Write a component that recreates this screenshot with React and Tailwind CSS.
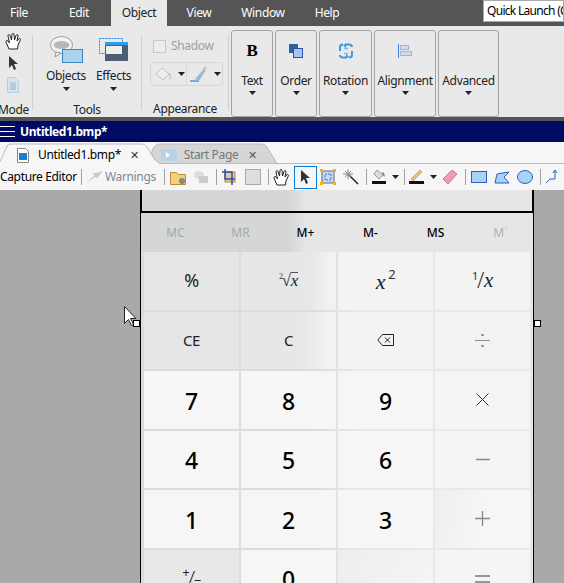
const Caret = ({ className = '' }) => (
  <svg width="7" height="4" viewBox="0 0 7 4" className={className}><path d="M0 0h7L3.500 4z" fill="#222" /></svg>
);

const RibbonButton = ({ label, width, icon }) => (
  <div className={`flex flex-col items-center h-[87px] border border-[#a3a3a3] rounded-[3px] ${width}`}>
    <div className="h-[20px] mt-[10px] flex items-center justify-center">{icon}</div>
    <div className="mt-[12px] leading-[16px]">{label}</div>
    <Caret className="mt-[2px]" />
  </div>
);

const Sep = ({ className = '' }) => <div className={`w-px h-[16px] bg-[#a0a0a0] shrink-0 ${className}`} />;

const Menu = ({ label, width, active }) => (
  <div className={`h-[26px] flex items-center justify-center ${width} ${active ? 'bg-[#e9e9e9] text-[#222]' : 'text-white'}`}>{label}</div>
);

const Hand = ({ className = '' }) => (
  <svg width="17" height="17" viewBox="0 0 17 17" fill="#fff" stroke="#222" className={className}>
    <path d="M4 16L1 9c-.5-1.500 1-2 2-1l1.500 2L3 3c-.3-1.500 1.700-2 2-.5L6.500 7 7 1.500c.1-1.500 2-1.500 2 0L9.500 7 11 2.500c.4-1.500 2.300-1 2 .5L12 8l1.500-2c.9-1.200 2.500-.3 1.800 1L13 12l-.5 4z" />
  </svg>
);

const Arrow = ({ className = '' }) => (
  <svg width="9" height="15" viewBox="0 0 9 15" className={className}><path d="M0 0l9 8H5l2 5-2 1-2-5-3 3z" fill="#333" /></svg>
);

const keys = [
  { k: '%', bg: 'bg-[#e6e6e6]', size: 'text-[18px]', font: 'light' },
  { k: 'root', bg: 'bg-[linear-gradient(90deg,#e7e7e7_70%,#f2f2f2_95%)]' },
  { k: 'sq', bg: 'bg-[#f3f3f3]' },
  { k: 'inv', bg: 'bg-[#f3f3f3]' },
  { k: 'CE', bg: 'bg-[#e6e6e6]', size: 'text-[15px]', font: 'light' },
  { k: 'C', bg: 'bg-[linear-gradient(90deg,#e7e7e7_65%,#f2f2f2_90%)]', size: 'text-[15px]', font: 'light' },
  { k: 'back', bg: 'bg-[#f3f3f3]' },
  { k: 'div', bg: 'bg-[#f2f2f2]' },
  { k: '7' }, { k: '8' }, { k: '9' }, { k: 'mul', bg: 'bg-[#f5f5f5]' },
  { k: '4' }, { k: '5' }, { k: '6' }, { k: 'min', bg: 'bg-[#f5f5f5]' },
  { k: '1' }, { k: '2' }, { k: '3' }, { k: 'add', bg: 'bg-[linear-gradient(100deg,#eeeeee,#f6f6f6_50%)]' },
  { k: 'neg', bg: 'bg-[#e8e8e8]' }, { k: '0' }, { k: 'dot', bg: 'bg-[linear-gradient(120deg,#ecefee,#f5f5f5)]' }, { k: 'eq', bg: 'bg-[#f5f5f5]' },
];

const MathX = ({ children }) => <span className="font-['Liberation_Serif',serif] italic text-[#222]">{children}</span>;

const KeyFace = ({ k, size, font }) => {
  if (k === 'root') return (
    <span className="text-[17px] flex items-start font-['Liberation_Serif',serif] leading-[17px]">
      <span className="text-[8px] leading-[10px] text-[#333]">2</span>
      <span className="text-[#333] -ml-[1px]">√</span>
      <span className="border-t border-[#555] leading-[15px]"><MathX>x</MathX></span>
    </span>
  );
  if (k === 'sq') return <span className="text-[22px] leading-none"><MathX>x</MathX><span className="text-[13px] align-top ml-[3px] relative -top-[1px] text-[#333]">2</span></span>;
  if (k === 'inv') return <span className="text-[21px] leading-none flex items-start"><span className="text-[11px] leading-[12px] text-[#333]">1</span><span className="text-[#333] font-light -ml-[1px]">/</span><MathX>x</MathX></span>;
  if (k === 'back') return (
    <svg width="17" height="12" viewBox="0 0 17 12" fill="none" stroke="#222"><path d="M5.500.5H16.500v11H5.500L.8 6z" /><path d="M8 3.500l5 5M13 3.500l-5 5" /></svg>
  );
  if (k === 'div') return (
    <svg width="15" height="13" viewBox="0 0 15 13"><path d="M0 6.500h15" stroke="#8a8a8a" /><rect x="6.500" y="0" width="2" height="2" fill="#777" /><rect x="6.500" y="11" width="2" height="2" fill="#777" /></svg>
  );
  if (k === 'mul') return <svg width="13" height="13" viewBox="0 0 13 13"><path d="M.5.500l12 12M12.500.500l-12 12" stroke="#333" /></svg>;
  if (k === 'min') return <svg width="14" height="3" viewBox="0 0 14 3"><path d="M0 1.500h14" stroke="#888" strokeWidth="1.500" /></svg>;
  if (k === 'add') return <svg width="15" height="15" viewBox="0 0 15 15"><path d="M0 7.500h15M7.500 0v15" stroke="#888" strokeWidth="1.300" /></svg>;
  if (k === 'eq') return <svg width="15" height="9" viewBox="0 0 15 9" className="mt-[2px]"><path d="M0 1h15M0 7h15" stroke="#777" strokeWidth="1.300" /></svg>;
  if (k === 'neg') return (
    <span className="flex items-start h-[20px] text-[#222] leading-none">
      <span className="text-[13px] -mt-[2px]">+</span>
      <span className="text-[19px] font-light -ml-[1px]">/</span>
      <span className="text-[13px] mt-[6px] -ml-[1px]">−</span>
    </span>
  );
  if (k === 'dot') return null;
  if (font === 'light') return <span className={`${size} text-[#222]`}>{k}</span>;
  return <span className="text-[23px] font-medium text-black leading-none mt-[3px]">{k}</span>;
};

export default function App() {
  return (
    <div className="relative w-[564px] h-[583px] overflow-hidden bg-[#a9a9a9] font-['Noto_Sans',sans-serif] text-[12px] tracking-[-0.35px] text-[#222]">
      {/* 메뉴 */}
      <div className="flex h-[26px] bg-[#555555]">
        <Menu label="File" width="w-[38px]" />
        <Menu label="Edit" width="w-[73px] pl-[9px]" />
        <Menu label="Object" width="w-[56px]" active />
        <Menu label="View" width="w-[64px]" />
        <Menu label="Window" width="w-[64px]" />
        <Menu label="Help" width="w-[64px]" />
        <div className="ml-auto w-[81px] h-[22px] bg-white border border-[#aaa] pl-[3px] leading-[20px] tracking-[-0.7px] text-black whitespace-nowrap overflow-hidden">Quick Launch (C</div>
      </div>

      {/* 리본 */}
      <div className="flex h-[91px] bg-[#e9e9e9]">
        <div className="w-[33px] h-[75px] mt-[9px] border-r border-[#d0d0d0] relative">
          <Hand className="absolute left-[5px] -top-[2px]" />
          <Arrow className="absolute left-[9px] top-[21px]" />
          <svg width="12" height="16" viewBox="0 0 12 16" className="absolute left-[7px] top-[42px]"><path d="M.5.500h7l4 4v11H.5z" fill="#d5e4ee" stroke="#bcccd6" /><path d="M3 6h6M3 8h6M3 10h6M3 12h6" stroke="#8eb4ca" /></svg>
          <div className="absolute -left-[2px] top-[67px] leading-[16px] whitespace-nowrap">Mode</div>
        </div>

        <div className="w-[109px] h-[75px] mt-[9px] border-r border-[#d0d0d0] flex flex-col">
          <div className="flex h-[56px]">
            <div className="w-[66px] flex flex-col items-center">
              <svg width="33" height="27" viewBox="0 0 33 27" className="mt-[1px] ml-[1px]"><ellipse cx="11.500" cy="9" rx="11" ry="8.500" fill="#f4f4f4" stroke="#9a9a9a" /><ellipse cx="11.500" cy="9" rx="8" ry="4" fill="#b7b7b7" /><path d="M6 16l-1 5 6-4z" fill="#f4f4f4" stroke="#9a9a9a" /><rect x="12.500" y="13.500" width="20" height="13" fill="#a9d3ef" stroke="#3f85bd" /></svg>
              <div className="mt-[5px] leading-[16px]">Objects</div>
              <Caret className="mt-[3px]" />
            </div>
            <div className="w-[29px] flex flex-col items-center">
              <svg width="29" height="23" viewBox="0 0 29 23" className="mt-[3px]"><rect x=".5" y=".5" width="23" height="15" fill="none" stroke="#1e88e5" strokeDasharray="2 1" /><rect x="6" y="4" width="23" height="19" fill="#4d5d74" /><rect x="6" y="4" width="23" height="3" fill="#2f9de6" /><rect x="7" y="8" width="16" height="8" fill="#eeeeee" /></svg>
              <div className="mt-[7px] leading-[16px]">Effects</div>
              <Caret className="mt-[3px]" />
            </div>
          </div>
          <div className="text-center mt-[11px] leading-[16px]">Tools</div>
        </div>

        <div className="w-[87px] h-[75px] mt-[9px] border-r border-[#d0d0d0] flex flex-col items-center">
          <div className="flex items-center gap-[5px] w-full pl-[11px] mt-[3px] text-[#a0a0a0]">
            <div className="w-[13px] h-[13px] border border-[#c8c8c8] bg-[#ededed]" />
            <span className="leading-[16px]">Shadow</span>
          </div>
          <div className="flex self-start ml-[8px] mt-[8px] w-[73px] h-[24px] border border-[#d8d8d8] rounded-[3px] shrink-0">
            <div className="w-[36px] border-r border-[#d8d8d8] flex items-center pl-[4px] gap-[5px]">
              <svg width="18" height="15" viewBox="0 0 18 15"><path d="M7 1l7 6-6 6-7-6z" fill="#eeeeee" stroke="#c0c0c0" /><path d="M14 6c3 1 3 5 1 7-1-3-1-5-1-7z" fill="#b8cfe4" /></svg>
              <Caret />
            </div>
            <div className="flex-1 flex items-center pl-[3px] gap-[7px]">
              <svg width="17" height="17" viewBox="0 0 17 17"><path d="M0 15h9" stroke="#7fa8d8" strokeWidth="2" /><path d="M5 13l9-10 2 1-7 11z" fill="#9db7dc" /><path d="M13 4l3-3" stroke="#d8c27a" strokeWidth="2" /></svg>
              <Caret />
            </div>
          </div>
          <div className="mt-[15px] leading-[16px] whitespace-nowrap shrink-0">Appearance</div>
        </div>

        <div className="flex gap-[2px] ml-[2px] mt-[4px]">
          <RibbonButton label="Text" width="w-[42px]" icon={<span className="font-['Liberation_Serif',serif] font-bold text-[17px] text-black">B</span>} />
          <RibbonButton label="Order" width="w-[42px]" icon={
            <svg width="14" height="14" viewBox="0 0 14 14"><rect width="9" height="9" fill="#2e5f9e" /><rect x="4.500" y="4.500" width="9" height="9" fill="#a9c4e6" stroke="#2b4fae" /></svg>
          } />
          <RibbonButton label="Rotation" width="w-[53px]" icon={
            <svg width="16" height="16" viewBox="0 0 16 16" fill="none" stroke="#3a9be0" strokeWidth="2">
              <path d="M2 8V4c0-1.500 1-2.500 3-2.500" />
              <path d="M8 1.500h3c2 0 3 1 3 2.500" />
              <path d="M14 8v4c0 1.500-1 2.500-3 2.500" />
              <path d="M8 14.500H5c-2 0-3-1-3-2.500" />
              <path d="M6 5.500h4M10 10.500H6" stroke="#7cc0ee" strokeWidth="1.500" />
              <path d="M8 0v5l-3-2.500zM8 16v-5l3 2.500z" fill="#3a9be0" stroke="none" />
            </svg>
          } />
          <RibbonButton label="Alignment" width="w-[62px]" icon={
            <svg width="14" height="14" viewBox="0 0 14 14"><path d="M.5 0v14" stroke="#4a7fe0" /><rect x="2.500" y="1.500" width="8" height="4" fill="#cfdcee" stroke="#9db4d4" /><rect x="2.500" y="7.500" width="11" height="4" fill="#cfdcee" stroke="#9db4d4" /></svg>
          } />
          <RibbonButton label="Advanced" width="w-[61px]" icon={null} />
        </div>
      </div>

      <div className="h-[4px] bg-[#555555]" />

      {/* 제목 표시줄 */}
      <div className="flex items-center h-[21px] bg-[#000a64] text-white">
        <svg width="15" height="13" viewBox="0 0 15 13"><path d="M0 1.500h15M0 6.500h15M0 11.500h15" stroke="#fff" strokeWidth="1.200" /></svg>
        <span className="ml-[5px] font-bold tracking-[-0.4px]">Untitled1.bmp*</span>
      </div>

      {/* 탭 */}
      <div className="relative flex items-center h-[22px] pt-[4px] bg-[#f6f6f6]">
        <svg width="564" height="22" viewBox="0 0 564 22" className="absolute left-0 top-0">
          <path d="M160 21.500Q155 19 152 13Q151 10 153 7Q155 2 160 2H262Q265 2 267 5L277 21.500z" fill="#d6d6d6" stroke="#bbbbbb" />
          <path d="M0 20L7 4Q8 2 11 2H142Q145 2 147 5L152 13Q155 19 160 21.500" fill="none" stroke="#bbbbbb" />
          <path d="M277 21.500H564" stroke="#bbbbbb" />
        </svg>
        <svg width="12" height="15" viewBox="0 0 12 15" className="relative ml-[17px]"><path d="M.5.500h8l3 3v11H.5z" fill="#fff" stroke="#888" /><rect x="2" y="5" width="8" height="7" fill="#1a7fd6" /></svg>
        <span className="relative ml-[9px] w-[81px] text-black whitespace-nowrap">Untitled1.bmp*</span>
        <span className="relative ml-[11px] text-[#333] text-[11px]">✕</span>
        <svg width="16" height="12" viewBox="0 0 16 12" className="relative ml-[22px]"><rect width="16" height="12" fill="#b7d3ea" /><path d="M5 3l4 3-4 3z" fill="#fff" /></svg>
        <span className="relative ml-[7px] w-[54px] text-[#777] whitespace-nowrap">Start Page</span>
        <span className="relative ml-[10px] text-[#555] text-[11px]">✕</span>
      </div>

      {/* 도구 모음 */}
      <div className="flex items-center h-[26px] bg-[#f6f6f6] whitespace-nowrap">
        <span className="w-[74px] text-black shrink-0">Capture Editor</span>
        <Sep className="ml-[7px]" />
        <svg width="18" height="14" viewBox="0 0 18 14" className="ml-[4px] shrink-0"><path d="M0 13L9 5 6 4 17 1 11 8 9 7z" fill="#c8c8c8" /></svg>
        <span className="ml-[1px] w-[50px] text-[#7d8a98] shrink-0">Warnings</span>
        <Sep className="ml-[9px]" />
        <svg width="17" height="15" viewBox="0 0 17 15" className="ml-[5px] shrink-0"><path d="M.5 2.500h6l2 2h7v10H.5z" fill="#f4cf7e" stroke="#b98b34" /><circle cx="12" cy="11" r="3" fill="#888" /></svg>
        <svg width="16" height="14" viewBox="0 0 16 14" className="ml-[6px] shrink-0"><ellipse cx="6" cy="5" rx="5" ry="4" fill="#dddddd" /><rect x="6" y="6" width="9" height="7" fill="#cccccc" /></svg>
        <Sep className="ml-[7px]" />
        <svg width="16" height="16" viewBox="0 0 16 16" className="ml-[5px] shrink-0"><rect x="3" y="3" width="10" height="10" fill="#edc690" stroke="#c48a3c" /><path d="M3 0v10h10M0 3h10v13" fill="none" stroke="#2550b8" strokeWidth="1.500" /></svg>
        <svg width="16" height="16" viewBox="0 0 16 16" className="ml-[7px] shrink-0"><rect x=".5" y=".5" width="15" height="15" fill="#dedede" stroke="#aaaaaa" /></svg>
        <Sep className="ml-[7px]" />
        <Hand className="ml-[4px] shrink-0" />
        <div className="w-[23px] h-[23px] ml-[4px] border border-[#0a7ad4] flex items-center justify-center shrink-0">
          <Arrow />
        </div>
        <svg width="16" height="16" viewBox="0 0 16 16" className="ml-[3px] shrink-0"><rect x="2" y="2" width="12" height="12" fill="#c9d8f4" stroke="#666677" /><rect x="5" y="5" width="6" height="6" fill="none" stroke="#3d6fe0" strokeDasharray="2 1" /><rect width="3" height="3" fill="#f5b400" /><rect x="13" width="3" height="3" fill="#f5b400" /><rect y="13" width="3" height="3" fill="#f5b400" /><rect x="13" y="13" width="3" height="3" fill="#f5b400" /></svg>
        <svg width="16" height="16" viewBox="0 0 16 16" className="ml-[7px] shrink-0"><path d="M5 5l10 10" stroke="#222" strokeWidth="1.500" /><path d="M5 0v10M0 5h10M2 2l6 6M8 2l-6 6" stroke="#888888" /></svg>
        <Sep className="ml-[7px]" />
        <svg width="14" height="16" viewBox="0 0 14 16" className="ml-[5px] shrink-0"><path d="M5 1l6 5-4 4-5-5z" fill="#dddddd" stroke="#999999" /><path d="M10 3c3 1 3 4 2 5z" fill="#3a78c8" /><rect y="12" width="14" height="3" fill="#111" /></svg>
        <Caret className="ml-[6px] shrink-0" />
        <Sep className="ml-[5px]" />
        <svg width="15" height="16" viewBox="0 0 15 16" className="ml-[4px] shrink-0"><path d="M2 10l9-9 2 2-9 9z" fill="#e3c27a" stroke="#a08040" strokeWidth=".5" /><rect y="12" width="15" height="3" fill="#111" /></svg>
        <Caret className="ml-[6px] shrink-0" />
        <svg width="16" height="16" viewBox="0 0 16 16" className="ml-[5px] shrink-0"><path d="M1 10L10 1l5 4-9 10z" fill="#eba0ad" stroke="#c97585" /></svg>
        <Sep className="ml-[7px]" />
        <svg width="16" height="12" viewBox="0 0 16 12" className="ml-[5px] shrink-0"><rect x=".5" y=".5" width="15" height="11" fill="#a9d3f5" stroke="#2b5fc0" /></svg>
        <svg width="16" height="13" viewBox="0 0 16 13" className="ml-[7px] shrink-0"><path d="M1 12l2-9 12-2-5 5 5 6z" fill="#a9d3f5" stroke="#2b5fc0" /></svg>
        <svg width="16" height="14" viewBox="0 0 16 14" className="ml-[7px] shrink-0"><ellipse cx="8" cy="7" rx="7.500" ry="6.500" fill="#a9d3f5" stroke="#2b5fc0" /></svg>
        <Sep className="ml-[7px]" />
        <svg width="14" height="14" viewBox="0 0 14 14" fill="none" stroke="#2b5fc0" className="ml-[4px] shrink-0"><path d="M1 13l4-4h5V1M8 3l2-3 2 3" /></svg>
      </div>

      {/* 캔버스 */}
      <div className="h-[393px] overflow-hidden pl-[140px]">
        <div className="w-[394px] h-[21px] border-x-2 border-black bg-[linear-gradient(90deg,#d5d7d7_38%,#e6e6e6_42%)]" />
        <div className="w-[394px] h-[2px] bg-black" />
        <div className="w-[394px] border-x border-black bg-[#e6e6e6]">
          <div className="grid grid-cols-[65px_65px_65px_65px_65px_65px] h-[39px] items-center pl-[2px] pt-[1px] text-[12px] tracking-normal font-medium bg-[linear-gradient(90deg,#d5d7d7_38%,#e6e6e6_42%)]">
            <span className="text-center text-[#a5a8a8] font-normal">MC</span>
            <span className="text-center text-[#a5a8a8] font-normal">MR</span>
            <span className="text-center text-black">M+</span>
            <span className="text-center text-black">M-</span>
            <span className="text-center text-black">MS</span>
            <span className="text-center text-[#b0b0b0] font-normal">M˅</span>
          </div>
          <div className="grid grid-cols-[95px_95px_95px_95px] gap-[2px] auto-rows-[57.500px] pl-[3px] pb-[2px] bg-[linear-gradient(90deg,#dcdcdc_45%,#e8e8e8_55%)]">
            {keys.map(({ k, bg, size, font }) => (
              <div key={k} className={`flex items-center justify-center ${bg ?? 'bg-[#f6f6f6]'}`}>
                <KeyFace k={k} size={size} font={font} />
              </div>
            ))}
          </div>
        </div>
      </div>

      {/* 선택 핸들, 커서 */}
      <div className="absolute left-[133px] top-[320px] w-[7px] h-[7px] bg-white border border-black" />
      <div className="absolute left-[534px] top-[320px] w-[7px] h-[7px] bg-white border border-black" />
      <svg width="13" height="20" viewBox="0 0 13 20" className="absolute left-[124px] top-[306px]"><path d="M.5.500v17l4-4 3 6 2-1-3-6h5.500z" fill="#fff" stroke="#222" /></svg>
    </div>
  );
}
